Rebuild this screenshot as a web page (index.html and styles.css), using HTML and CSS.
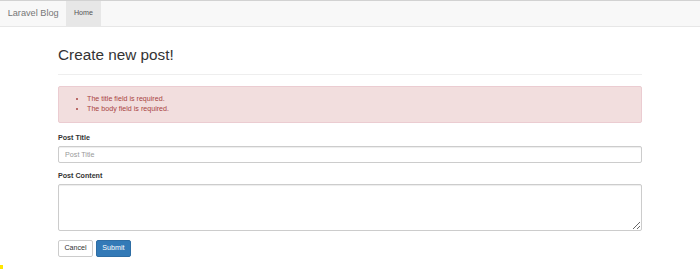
FILE: index.html
```html
<!DOCTYPE html>
<html lang="en">
<head>
<meta charset="utf-8">
<title>Laravel Blog</title>
<link rel="stylesheet" href="styles.css">
</head>
<body>
<nav class="navbar">
  <a class="navbar-brand" href="#">Laravel Blog</a>
  <ul class="nav">
    <li class="nav-item active"><a class="nav-link" href="#">Home</a></li>
  </ul>
</nav>
<main class="container">
  <h2 class="title">Create new post!</h2>
  <hr class="divider">
  <div class="alert">
    <ul>
      <li>The title field is required.</li>
      <li>The body field is required.</li>
    </ul>
  </div>
  <form class="post-form">
    <div class="form-group">
      <label for="title">Post Title</label>
      <input id="title" class="form-control" type="text" placeholder="Post Title">
    </div>
    <div class="form-group">
      <label for="body">Post Content</label>
      <textarea id="body" class="form-control textarea"></textarea>
    </div>
    <div class="actions">
      <a class="btn btn-default" href="#">Cancel</a>
      <button class="btn btn-primary" type="submit">Submit</button>
    </div>
  </form>
</main>
<div class="corner-mark"></div>
</body>
</html>
```

FILE: styles.css
```css
* { box-sizing: border-box; }

html, body {
  margin: 0;
  padding: 0;
  background: #fff;
}

body {
  font-family: "Liberation Sans", Arial, Helvetica, sans-serif;
  font-size: 7.14px;
  line-height: 1.42857;
  color: #333;
}

a { text-decoration: none; }

.navbar {
  display: flex;
  align-items: stretch;
  min-height: 27px;
  background: #f8f8f8;
  border-top: 1px solid #d2d2d2;
  border-bottom: 1px solid #e7e7e7;
  margin-bottom: 10.2px;
}

.navbar-brand {
  display: flex;
  align-items: center;
  padding: 0 7.65px;
  font-size: 9.18px;
  line-height: 10.2px;
  color: #777;
}

.nav {
  display: flex;
  list-style: none;
  margin: 0;
  padding: 0;
}

.nav-link {
  display: flex;
  align-items: center;
  height: 100%;
  padding: 0 7.65px;
  color: #777;
}

.nav-item.active .nav-link {
  background: #e7e7e7;
  color: #555;
}

.container {
  display: flow-root;
  width: 584px;
  margin: 0 auto;
}

.title {
  margin: 10.2px 0 5.1px;
  font-size: 15.3px;
  line-height: 1.1;
  font-weight: 500;
  color: #333;
}

.divider {
  margin: 10.2px 0;
  border: 0;
  border-top: 1px solid #eee;
}

.alert {
  padding: 7.65px;
  margin-bottom: 10.2px;
  border: 1px solid #ebccd1;
  border-radius: 2px;
  background: #f2dede;
  color: #a94442;
}

.alert ul {
  margin: 0;
  padding-left: 20.4px;
}

.form-group {
  margin-bottom: 7.65px;
}

.form-group label {
  display: inline-block;
  margin-bottom: 2.55px;
  font-weight: bold;
}

.form-control {
  display: block;
  width: 100%;
  height: 17.3px;
  padding: 3.06px 6.12px;
  font-family: inherit;
  font-size: 7.14px;
  line-height: 1.42857;
  color: #555;
  background: #fff;
  border: 1px solid #ccc;
  border-radius: 2px;
  box-shadow: inset 0 1px 1px rgba(0,0,0,.075);
  margin: 0;
}

.form-control::placeholder {
  color: #999;
}

.textarea {
  height: 47px;
  resize: vertical;
}

.actions {
  display: flex;
  gap: 3px;
  padding-top: 1.4px;
}

.btn {
  display: inline-block;
  height: 17.3px;
  padding: 2.5px 5.4px;
  font-family: inherit;
  font-size: 7.14px;
  line-height: 10.2px;
  border: 1px solid transparent;
  border-radius: 2px;
  cursor: pointer;
  margin: 0;
}

.btn-default {
  color: #333;
  background: #fff;
  border-color: #ccc;
}

.btn-primary {
  color: #fff;
  background: #337ab7;
  border-color: #2e6da4;
}

.corner-mark {
  position: fixed;
  left: 0;
  bottom: 0;
  width: 3px;
  height: 4px;
  background: #ffe600;
}
```
